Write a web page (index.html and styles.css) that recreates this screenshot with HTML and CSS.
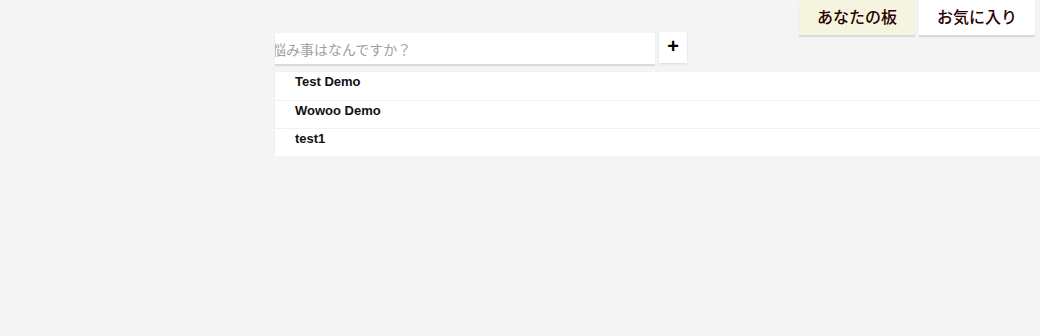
FILE: index.html
```html
<!DOCTYPE html>
<html lang="ja">
<head>
  <meta charset="UTF-8" />
  <title>板</title>
  <link rel="stylesheet" href="styles.css">
</head>
<body>
  <div class="tabs">
    <div class="tab active">あなたの板</div>
    <div class="tab">お気に入り</div>
  </div>
  <div class="main">
    <div class="ask">
      <input class="ask-input" type="text" placeholder="悩み事はなんですか？">
      <div class="add-btn">+</div>
    </div>
    <ul class="boards">
      <li>Test Demo</li>
      <li>Wowoo Demo</li>
      <li>test1</li>
    </ul>
  </div>
</body>
</html>
```

FILE: styles.css
```css
body {
  margin: 0;
  background: #f4f4f4;
  font-family: "Liberation Sans", Arial, "Noto Sans CJK JP", sans-serif;
  overflow: hidden;
}
.tabs {
  display: flex;
  justify-content: flex-end;
  gap: 4px;
  padding-right: 5px;
}
.tab {
  height: 35px;
  line-height: 33px;
  padding: 0 18px;
  background: #fff;
  color: #2a0000;
  font-family: "Noto Sans CJK JP", sans-serif;
  font-size: 16px;
  font-weight: 500;
  box-shadow: 0 2px 1px #d6dae2;
}
.tab.active {
  background: #f5f5df;
}
.main {
  margin-left: 275px;
  margin-top: -3px;
}
.ask {
  display: flex;
  align-items: flex-start;
  gap: 4px;
}
.ask-input {
  width: 380px;
  height: 31px;
  margin-top: 1px;
  box-sizing: border-box;
  border: none;
  outline: none;
  padding: 0;
  text-indent: -3px;
  background: #fff;
  font-family: "Noto Sans CJK JP", sans-serif;
  font-size: 14px;
  box-shadow: 0 2px 1px #d6dae2;
}
.ask-input::placeholder {
  color: #a0a0a0;
}
.add-btn {
  width: 28px;
  height: 31px;
  line-height: 29px;
  text-align: center;
  background: #fff;
  font-size: 20px;
  font-weight: bold;
  color: #000;
  box-shadow: 0 1px 2px #d6dae2;
}
.boards {
  list-style: none;
  margin: 8px 0 0;
  padding: 0;
  background: #fff;
  box-shadow: 0 2px 1px #d3d7df;
}
.boards li {
  height: 28px;
  line-height: 20px;
  padding-left: 20px;
  box-sizing: border-box;
  font-size: 13px;
  font-weight: bold;
  color: #111;
  border-top: 1px solid #f1f1f1;
}
.boards li:first-child {
  border-top: none;
}
```
